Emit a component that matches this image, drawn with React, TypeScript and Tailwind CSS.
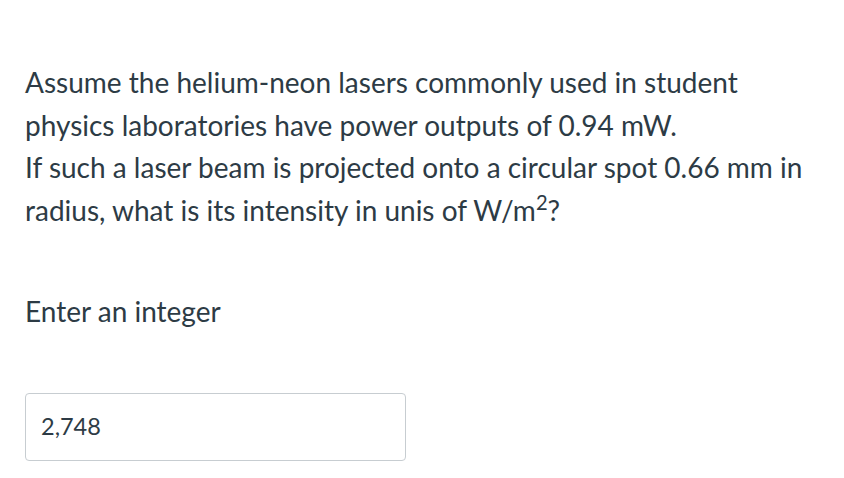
export default function App() {
  return (
    <div className="w-[844px] h-[478px] bg-white text-[#2d3b45] overflow-hidden" style={{ fontFamily: "Lato, 'Noto Sans', sans-serif" }}>
      <div className="pl-[25px] pt-[61px]">
        <div className="text-[28px] leading-[42.5px] w-[795px]">
          <p>Assume the helium-neon lasers commonly used in student physics laboratories have power outputs of 0.94 mW.</p>
          <p>If such a laser beam is projected onto a circular spot 0.66 mm in radius, what is its intensity in unis of W/m<sup className="text-[0.72em] leading-none">2</sup>?</p>
        </div>
        <p className="text-[28px] leading-[42.5px] mt-[59px]">Enter an integer</p>
        <div className="mt-[60px] w-[381px] h-[68px] border border-[#c7cdd1] rounded-[4px] flex items-center px-[15px] text-[23.5px]">
          2,748
        </div>
      </div>
    </div>
  );
}
